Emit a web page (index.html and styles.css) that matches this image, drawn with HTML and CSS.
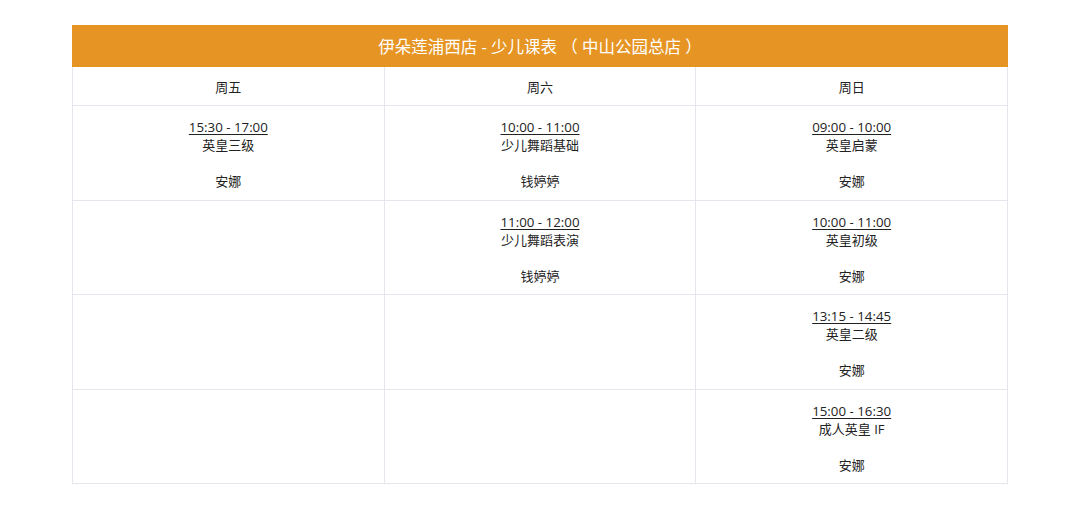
FILE: index.html
```html
<!DOCTYPE html>
<html lang="zh-CN">
<head>
<meta charset="utf-8">
<link rel="stylesheet" href="styles.css">
</head>
<body>
<div class="page">
  <table class="schedule">
    <thead>
      <tr><th class="title" colspan="3">伊朵莲浦西店 - 少儿课表 （ 中山公园总店 ）</th></tr>
      <tr class="days"><th>周五</th><th>周六</th><th>周日</th></tr>
    </thead>
    <tbody>
      <tr>
        <td><div class="cls"><span class="time">15:30 - 17:00</span><span>英皇三级</span><span class="gap"></span><span>安娜</span></div></td>
        <td><div class="cls"><span class="time">10:00 - 11:00</span><span>少儿舞蹈基础</span><span class="gap"></span><span>钱婷婷</span></div></td>
        <td><div class="cls"><span class="time">09:00 - 10:00</span><span>英皇启蒙</span><span class="gap"></span><span>安娜</span></div></td>
      </tr>
      <tr>
        <td></td>
        <td><div class="cls"><span class="time">11:00 - 12:00</span><span>少儿舞蹈表演</span><span class="gap"></span><span>钱婷婷</span></div></td>
        <td><div class="cls"><span class="time">10:00 - 11:00</span><span>英皇初级</span><span class="gap"></span><span>安娜</span></div></td>
      </tr>
      <tr>
        <td></td>
        <td></td>
        <td><div class="cls"><span class="time">13:15 - 14:45</span><span>英皇二级</span><span class="gap"></span><span>安娜</span></div></td>
      </tr>
      <tr>
        <td></td>
        <td></td>
        <td><div class="cls"><span class="time">15:00 - 16:30</span><span>成人英皇 IF</span><span class="gap"></span><span>安娜</span></div></td>
      </tr>
    </tbody>
  </table>
</div>
</body>
</html>
```

FILE: styles.css
```css
html, body {
  margin: 0;
  padding: 0;
  background: #ffffff;
}
body {
  font-family: "Open Sans", "Noto Sans CJK SC", sans-serif;
  color: #222222;
}
.page {
  padding: 25px 0 0 72px;
}
.schedule {
  width: 936px;
  border-collapse: collapse;
  table-layout: fixed;
}
.schedule th.title {
  background: #e69524;
  color: #ffffff;
  font-weight: normal;
  font-size: 16.5px;
  height: 40px;
  padding: 0;
  border: 1px solid #e69524;
  text-align: center;
  vertical-align: middle;
}
.days th {
  font-weight: normal;
  font-size: 13px;
  height: 38px;
  padding: 0;
  border: 1px solid #e6e6ee;
  text-align: center;
  vertical-align: middle;
}
.schedule td {
  border: 1px solid #e6e6ee;
  height: 93.5px;
  padding: 0;
  vertical-align: top;
  text-align: center;
}
.cls {
  display: flex;
  flex-direction: column;
  align-items: center;
  padding-top: 12px;
  font-size: 13px;
  line-height: 18px;
}
.cls span {
  display: block;
}
.cls .time {
  font-size: 13.3px;
  text-decoration: underline;
  text-underline-offset: 2px;
}
.cls .gap {
  height: 18px;
}
```
